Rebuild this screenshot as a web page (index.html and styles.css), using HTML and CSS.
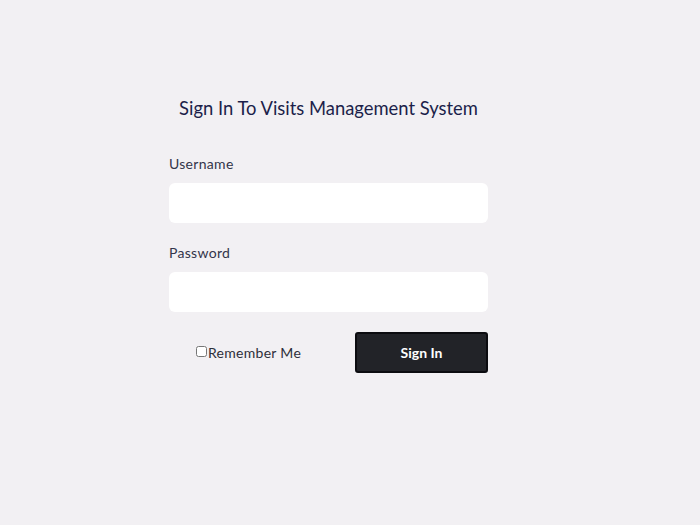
FILE: index.html
```html
<!DOCTYPE html>
<html>
<head>
<meta charset="utf-8">
<link rel="stylesheet" href="styles.css">
</head>
<body>
<main class="page">
  <form class="login">
    <h1 class="title">Sign In To Visits Management System</h1>
    <label class="field-label" for="username">Username</label>
    <input class="field" id="username" type="text">
    <label class="field-label" for="password">Password</label>
    <input class="field" id="password" type="password">
    <div class="actions">
      <label class="remember"><input type="checkbox" class="check">Remember Me</label>
      <button type="button" class="submit">Sign In</button>
    </div>
  </form>
</main>
</body>
</html>
```
FILE: styles.css
```css
html, body {
  margin: 0;
  padding: 0;
  background: #f2f0f3;
  font-family: "Lato", "Open Sans", sans-serif;
}
.page {
  display: flex;
  justify-content: center;
  padding-right: 43px;
  padding-top: 95px;
}
.login {
  width: 319px;
  display: flex;
  flex-direction: column;
}
.title {
  margin: 0;
  font-size: 18.4px;
  font-weight: 400;
  color: #1c1f4a;
  text-align: center;
  line-height: 26px;
  white-space: nowrap;
}
.field-label {
  margin-top: 34px;
  font-size: 14px;
  color: #33354a;
  line-height: 18px;
  letter-spacing: 0.3px;
}
.field {
  margin-top: 10px;
  height: 40px;
  box-sizing: border-box;
  border: none;
  border-radius: 6px;
  background: #ffffff;
  outline: none;
}
.field + .field-label {
  margin-top: 21px;
}
.actions {
  margin-top: 20px;
  display: flex;
  align-items: center;
}
.remember {
  flex: 1;
  display: flex;
  align-items: center;
  justify-content: center;
  padding-right: 27px;
  font-size: 14px;
  color: #2e2f3a;
  letter-spacing: 0.3px;
}
.check {
  margin: 0 1px 2px 0;
  width: 11px;
  height: 11px;
}
.submit {
  width: 133px;
  height: 41px;
  box-sizing: border-box;
  background: #222328;
  border: 2px solid #0c0c10;
  border-radius: 3px;
  color: #ffffff;
  font-family: "Lato", sans-serif;
  font-weight: 700;
  font-size: 14px;
}
```
